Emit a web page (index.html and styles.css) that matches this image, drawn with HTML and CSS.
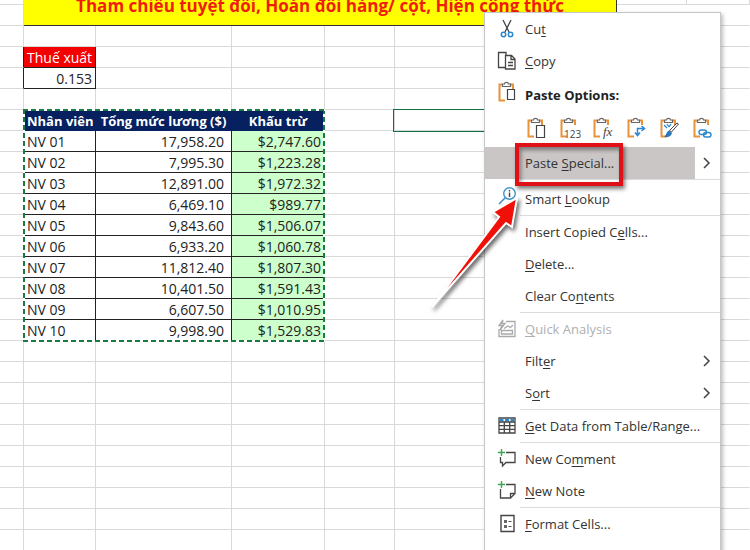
FILE: index.html
```html
<!DOCTYPE html>
<html lang="vi">
<head>
<meta charset="utf-8">
<title>Paste Special</title>
<link rel="stylesheet" href="styles.css">
</head>
<body>
<main class="workspace">
  <div class="sheet">
    <table class="grid">
      <colgroup><col class="c-edge"><col class="c-name"><col class="c-total"><col class="c-cut"><col class="c-std"><col class="c-wide"><col class="c-std"><col class="c-std"><col></colgroup>
      <tbody>
        <tr class="clip"><td></td><th class="title" colspan="6" rowspan="2">Tham chiếu tuyệt đối, Hoán đổi hàng/ cột, Hiện công thức</th><td></td><td></td></tr>
        <tr><td></td><td></td><td></td></tr>
        <tr><td></td><td></td><td></td><td></td><td></td><td></td><td></td><td></td><td></td></tr>
        <tr><td class="e"></td><th class="rate">Thuế xuất</th><td></td><td></td><td></td><td></td><td></td><td></td><td></td></tr>
        <tr><td class="e"></td><td class="ink num">0.153</td><td></td><td></td><td></td><td></td><td></td><td></td><td></td></tr>
        <tr><td></td><td></td><td></td><td></td><td></td><td></td><td></td><td></td><td></td></tr>
        <tr><td></td><th class="head left">Nhân viên</th><th class="head">Tổng mức lương ($)</th><th class="head">Khấu trừ</th><td></td><td></td><td></td><td></td><td></td></tr>
        <tr><td></td><td class="ink">NV 01</td><td class="ink amount">17,958.20</td><td class="ink cut">$2,747.60</td><td></td><td></td><td></td><td></td><td></td></tr>
        <tr><td></td><td class="ink">NV 02</td><td class="ink amount">7,995.30</td><td class="ink cut">$1,223.28</td><td></td><td></td><td></td><td></td><td></td></tr>
        <tr><td></td><td class="ink">NV 03</td><td class="ink amount">12,891.00</td><td class="ink cut">$1,972.32</td><td></td><td></td><td></td><td></td><td></td></tr>
        <tr><td></td><td class="ink">NV 04</td><td class="ink amount">6,469.10</td><td class="ink cut">$989.77</td><td></td><td></td><td></td><td></td><td></td></tr>
        <tr><td></td><td class="ink">NV 05</td><td class="ink amount">9,843.60</td><td class="ink cut">$1,506.07</td><td></td><td></td><td></td><td></td><td></td></tr>
        <tr><td></td><td class="ink">NV 06</td><td class="ink amount">6,933.20</td><td class="ink cut">$1,060.78</td><td></td><td></td><td></td><td></td><td></td></tr>
        <tr><td></td><td class="ink">NV 07</td><td class="ink amount">11,812.40</td><td class="ink cut">$1,807.30</td><td></td><td></td><td></td><td></td><td></td></tr>
        <tr><td></td><td class="ink">NV 08</td><td class="ink amount">10,401.50</td><td class="ink cut">$1,591.43</td><td></td><td></td><td></td><td></td><td></td></tr>
        <tr><td></td><td class="ink">NV 09</td><td class="ink amount">6,607.50</td><td class="ink cut">$1,010.95</td><td></td><td></td><td></td><td></td><td></td></tr>
        <tr><td></td><td class="ink">NV 10</td><td class="ink amount">9,998.90</td><td class="ink cut">$1,529.83</td><td></td><td></td><td></td><td></td><td></td></tr>
        <tr><td></td><td></td><td></td><td></td><td></td><td></td><td></td><td></td><td></td></tr>
        <tr><td></td><td></td><td></td><td></td><td></td><td></td><td></td><td></td><td></td></tr>
        <tr><td></td><td></td><td></td><td></td><td></td><td></td><td></td><td></td><td></td></tr>
        <tr><td></td><td></td><td></td><td></td><td></td><td></td><td></td><td></td><td></td></tr>
        <tr><td></td><td></td><td></td><td></td><td></td><td></td><td></td><td></td><td></td></tr>
        <tr><td></td><td></td><td></td><td></td><td></td><td></td><td></td><td></td><td></td></tr>
        <tr><td></td><td></td><td></td><td></td><td></td><td></td><td></td><td></td><td></td></tr>
        <tr><td></td><td></td><td></td><td></td><td></td><td></td><td></td><td></td><td></td></tr>
        <tr><td></td><td></td><td></td><td></td><td></td><td></td><td></td><td></td><td></td></tr>
        <tr><td></td><td></td><td></td><td></td><td></td><td></td><td></td><td></td><td></td></tr>
      </tbody>
    </table>
    <div class="ants"></div>
    <div class="selected"></div>
  </div>

  <svg class="defs" aria-hidden="true">
    <symbol id="board" viewBox="0 0 20 22">
      <path d="M5 3.500H2.500V19.500H8" fill="none" stroke="#e8923a" stroke-width="2"/>
      <path d="M13 3.500h3V8" fill="none" stroke="#e8923a" stroke-width="2"/>
      <path d="M5.500 5.500V3H7.500C7.500 .8 11.500 .8 11.500 3H13.500V5.500Z" fill="#fff" stroke="#666" stroke-width="1.200"/>
    </symbol>
  </svg>

  <nav class="menu" aria-label="Menu">
    <section>
      <button class="item"><svg class="icon" viewBox="0 0 20 20"><path d="M6 1l6 12M14 1L8 13" fill="none" stroke="#444" stroke-width="1.300"/><g fill="none" stroke="#2b88d0" stroke-width="1.500"><circle cx="6.500" cy="15.500" r="2.200"/><circle cx="13.500" cy="15.500" r="2.200"/></g></svg><span>Cu<u>t</u></span></button>
      <button class="item"><svg class="icon" viewBox="0 0 20 20"><g fill="none" stroke="#444" stroke-width="1.300"><path d="M8 16.500H1.500V1.500H9V4"/><path d="M8.500 4.500h6l3.500 3.500v10H8.500zM14 4.500V8.500h4M11 11.500h5M11 14.500h5"/></g></svg><span><u>C</u>opy</span></button>
      <div class="item heading"><svg class="icon tall" viewBox="0 0 20 22"><use href="#board"/><path d="M10.500 8.500h7v10h-7z" fill="#fff" stroke="#444" stroke-width="1.200"/></svg><span>Paste Options:</span></div>
      <div class="options">
        <button aria-label="Paste"><svg viewBox="0 0 20 22"><use href="#board"/><path d="M10.500 8.500h8v12h-8z" fill="#fff" stroke="#444" stroke-width="1.200"/></svg></button>
        <button aria-label="Values"><svg viewBox="0 0 20 22"><use href="#board"/><text x="5" y="21" class="mark">123</text></svg></button>
        <button aria-label="Formulas"><svg viewBox="0 0 20 22"><use href="#board"/><text x="11" y="19" class="mark fx">fx</text></svg></button>
        <button aria-label="Transpose"><svg viewBox="0 0 20 22"><use href="#board"/><g fill="none" stroke="#2b88d0" stroke-width="1.500"><path d="M11.500 18V11.500H18M9 15.500l2.500 3 2.500-3M15.500 9l3 2.500-3 2.500"/></g></svg></button>
        <button aria-label="Formatting"><svg viewBox="0 0 20 22"><use href="#board"/><path d="M5 8l3 3M8 7l2 3M12 7l-2 3" stroke="#2b88d0" stroke-width="1.300"/><path d="M19.500 7l-7 8-2-1.500L18 6z" fill="#fff" stroke="#444"/><path d="M10 13.500l3 2.500c-1 4-5 4.500-8 4 2-1 2-5 5-6.500z" fill="#2b78b8"/></svg></button>
        <button aria-label="Paste Link"><svg viewBox="0 0 20 22"><use href="#board"/><g fill="none" stroke="#2b88d0" stroke-width="1.400"><rect x="7" y="13" width="7.500" height="4.500" rx="2.200"/><rect x="11.500" y="15.500" width="7.500" height="4.500" rx="2.200"/></g></svg></button>
      </div>
      <button class="item active"><span>Paste <u>S</u>pecial...</span><svg class="arrow" viewBox="0 0 8 12"><path d="M1 1l5 5-5 5"/></svg></button>
    </section>
    <section class="lookup">
      <button class="item"><svg class="icon" viewBox="0 0 20 20"><circle cx="12.500" cy="7.500" r="5.800" fill="#fff" stroke="#3e93c8" stroke-width="1.400"/><path d="M8.500 11.500L2 18" stroke="#3e93c8" stroke-width="1.600"/><path d="M12.500 4v1.500M12.500 6.500v4.500" stroke="#345" stroke-width="1.400"/></svg><span>Smart <u>L</u>ookup</span></button>
    </section>
    <section>
      <button class="item"><span>Insert Copied C<u>e</u>lls...</span></button>
      <button class="item"><span><u>D</u>elete...</span></button>
      <button class="item"><span>Clear Co<u>n</u>tents</span></button>
    </section>
    <section>
      <button class="item" disabled><svg class="icon" viewBox="0 0 20 20"><g fill="none" stroke="#aaa" stroke-width="1.300"><path d="M9 2.500h9v15H2V10M4.500 15h11v-3.500h-11zM7 9.500l4-2.500 2.500 1.500L16 6M6 1L2 6.500h3L3 11l5-6.500H5z"/></g></svg><span><u>Q</u>uick Analysis</span></button>
      <button class="item"><span>Filt<u>e</u>r</span><svg class="arrow" viewBox="0 0 8 12"><path d="M1 1l5 5-5 5"/></svg></button>
      <button class="item"><span>S<u>o</u>rt</span><svg class="arrow" viewBox="0 0 8 12"><path d="M1 1l5 5-5 5"/></svg></button>
    </section>
    <section>
      <button class="item"><svg class="icon" viewBox="0 0 20 20"><path d="M2 2h16v15H2z" fill="#fff"/><path d="M3 3h3.500v2.500H3zM8 3h4v2.500H8zM13.500 3H17v2.500h-3.500z" fill="#2b88d0"/><path d="M2 2h16v15H2zM2 6h16M2 9.700h16M2 13.400h16M7.300 6v11M12.700 6v11" fill="none" stroke="#444" stroke-width="1.300"/></svg><span><u>G</u>et Data from Table/Range...</span></button>
    </section>
    <section>
      <button class="item"><svg class="icon" viewBox="0 0 20 20"><path d="M9 3.500h9v10H9l-3.500 3.500v-3.500H3.500V8" fill="none" stroke="#444" stroke-width="1.300"/><path d="M4.500 0v7M1 3.500h7" stroke="#3aa655" stroke-width="1.400"/></svg><span>New Co<u>m</u>ment</span></button>
      <button class="item"><svg class="icon" viewBox="0 0 20 20"><path d="M9 3.500h9v9l-4.500 4.500H3.500V8M18 12.500h-4.500V17" fill="none" stroke="#444" stroke-width="1.300"/><path d="M4.500 0v7M1 3.500h7" stroke="#3aa655" stroke-width="1.400"/></svg><span><u>N</u>ew Note</span></button>
    </section>
    <section>
      <button class="item"><svg class="icon" viewBox="0 0 20 20"><path d="M4 1.500h13v16H4z" fill="none" stroke="#444" stroke-width="1.400"/><path d="M7 6h3v3H7zM7 11h3v3H7z" fill="#666"/><path d="M11.500 7.500h3M11.500 12.500h3" stroke="#555" stroke-width="1.200"/></svg><span><u>F</u>ormat Cells...</span></button>
    </section>
  </nav>

  <div class="callout"></div>
  <svg class="pointer" viewBox="0 0 110 130"><path d="M12 117L79 27 73 22 97 8 92 37 86 33Z"/></svg>
</main>
</body>
</html>
```
FILE: styles.css
```css
* { box-sizing: border-box; }

body {
  margin: 0;
  background: #fff;
  color: #222;
  font-family: "Open Sans", "Noto Sans", sans-serif;
}

.workspace {
  position: relative;
  height: 100vh;
  overflow: hidden;
}

.sheet { position: relative; }

.grid {
  width: 100%;
  table-layout: fixed;
  border-collapse: separate;
  border-spacing: 0;
  font-size: 14px;
  line-height: 18px;
}

.c-edge { width: 24px; }
.c-name { width: 72px; }
.c-total { width: 136px; }
.c-cut { width: 93px; }
.c-std { width: 70px; }
.c-wide { width: 152px; }

.grid tr { height: 21px; }
.grid .clip { height: 5px; }

.grid td,
.grid th {
  padding: 2px 3px 0;
  border-right: 1px solid #d9d9d9;
  border-bottom: 1px solid #d9d9d9;
  white-space: nowrap;
}

.grid .clip td { padding: 0; }
.grid td:nth-last-child(-n+2) { border-right-color: #fff; }
.grid .clip td { border-right-color: #d9d9d9; }

.grid .title {
  padding: 0 3px;
  background: #ff0;
  color: #f01c10;
  border-color: #333;
  font-size: 17px;
  line-height: 12px;
  vertical-align: top;
}

.grid .ink { border-color: #222; }
.grid .rate { background: #f40000; color: #fff; font-weight: 400; border-color: #222; }
.grid .head { padding: 2px 2px 0; background: #062060; color: #fff; border-color: #062060; font-size: 13px; }
.grid .left { padding-left: 3px; text-align: left; }
.grid .num { text-align: right; }
.grid .amount { text-align: right; padding-right: 7px; }
.grid .cut { text-align: right; background: #cfc; }
.grid .e { border-right-color: #222; }

.ants {
  position: absolute;
  left: 23px;
  top: 109px;
  width: 302px;
  height: 233px;
  background:
    repeating-linear-gradient(90deg, #1a7a43 0 5px, #fff 5px 8px) top / 100% 2px no-repeat,
    repeating-linear-gradient(90deg, #1a7a43 0 5px, #fff 5px 8px) bottom / 100% 2px no-repeat,
    repeating-linear-gradient(#1a7a43 0 5px, #fff 5px 8px) left / 2px 100% no-repeat,
    repeating-linear-gradient(#1a7a43 0 5px, #fff 5px 8px) right / 2px 100% no-repeat;
}

.selected {
  position: absolute;
  left: 393px;
  top: 109px;
  width: 154px;
  height: 23px;
  border: 1px solid #107040;
}

.defs { position: absolute; width: 0; height: 0; }

.menu {
  position: absolute;
  left: 484px;
  top: 12px;
  width: 237px;
  padding-bottom: 32px;
  background: #fff;
  border: 1px solid #c6c6c6;
  box-shadow: 2px 2px 4px rgba(0, 0, 0, .25);
  font-size: 13px;
}

.menu section + section::before {
  content: "";
  display: block;
  height: 1px;
  margin-left: 35px;
  background: #dcdcdc;
}

.menu .lookup .item { margin-top: 3px; }
.menu .lookup .icon { top: 3px; }

.menu button {
  border: 0;
  background: none;
  color: inherit;
  font: inherit;
}

.menu .item {
  position: relative;
  display: flex;
  align-items: center;
  width: 100%;
  height: 32px;
  padding: 0 9px 0 40px;
  color: #333;
  text-align: left;
}

.menu .item:disabled { color: #b0b0b0; }
.menu .heading { height: 36px; font-weight: 700; color: #222; }

.menu u { text-underline-offset: 2px; }

.icon {
  position: absolute;
  left: 12px;
  width: 20px;
  height: 20px;
}

.icon.tall { height: 22px; top: 4px; }

.options {
  display: flex;
  justify-content: space-between;
  height: 34px;
  padding: 4px 6px 0 41px;
}

.menu .options button { width: 22px; height: 22px; padding: 0; }
.options svg { display: block; width: 20px; height: 22px; overflow: visible; }
.mark { font: 10px "Open Sans", sans-serif; fill: #444; }
.fx { font: italic 13px "Liberation Serif", serif; }

.arrow {
  width: 8px;
  height: 12px;
  margin-left: auto;
  fill: none;
  stroke: #444;
  stroke-width: 1.5;
}

.menu .active { background: linear-gradient(90deg, #c9c6c5 210px, #fff 210px); }

.callout {
  position: absolute;
  left: 515px;
  top: 143px;
  width: 108px;
  height: 43px;
  border: 4px solid #e01018;
  box-shadow: 2px 3px 4px rgba(0, 0, 0, .5), inset 2px 3px 4px rgba(0, 0, 0, .4);
}

.pointer {
  position: absolute;
  left: 420px;
  top: 190px;
  width: 110px;
  height: 130px;
  fill: #f01008;
  stroke: #fff;
  stroke-width: 2;
  filter: drop-shadow(2px 3px 2px rgba(0, 0, 0, .6));
}
```
